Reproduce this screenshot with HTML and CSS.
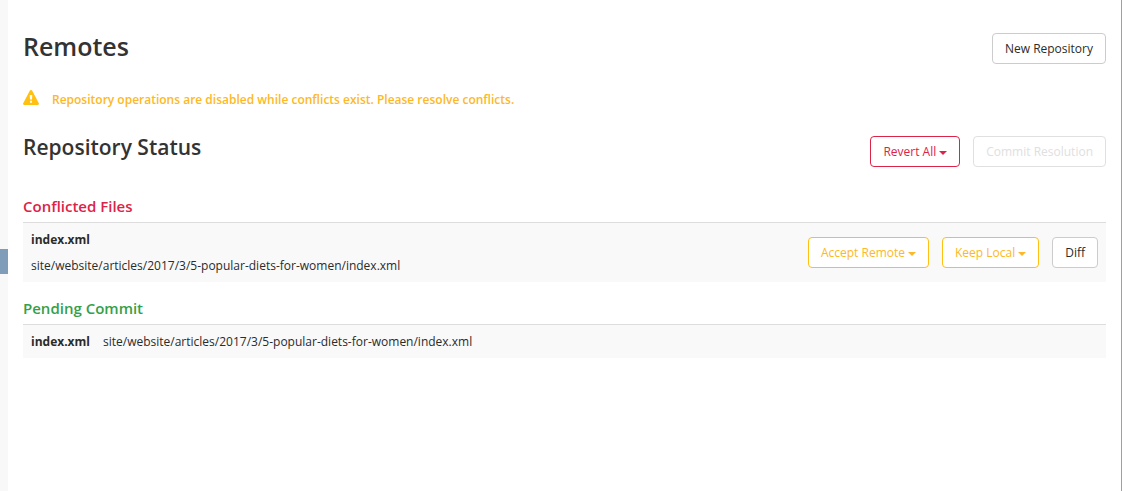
FILE: index.html
```html
<!DOCTYPE html>
<html lang="en">
<head>
<meta charset="utf-8">
<meta name="viewport" content="width=device-width, initial-scale=1">
<title>Remotes</title>
<link rel="stylesheet" href="styles.css">
</head>
<body>
<div class="layout">
  <div class="rail"><div class="rail-active"></div></div>
  <main class="content">
    <header class="bar bar-title">
      <h1 class="title">Remotes</h1>
      <button class="btn" type="button">New Repository</button>
    </header>
    <p class="warning" role="alert">
      <svg class="warning-icon" viewBox="0 0 16 15" aria-hidden="true"><path fill-rule="evenodd" d="M8 0c.5 0 .9.2 1.100.6l6.700 12.600c.5.800-.1 1.800-1.100 1.800H1.300c-1 0-1.600-1-1.100-1.800L6.900.6C7.100.2 7.500 0 8 0zM6.700 5l.3 4.600h2L9.300 5H6.700zM7 10.700v2h2v-2H7z"/></svg>
      <span>Repository operations are disabled while conflicts exist. Please resolve conflicts.</span>
    </p>
    <div class="bar">
      <h2 class="subtitle">Repository Status</h2>
      <div class="actions actions-status">
        <button class="btn btn-danger" type="button" aria-haspopup="true">Revert All<span class="caret"></span></button>
        <button class="btn" type="button" disabled>Commit Resolution</button>
      </div>
    </div>
    <section class="groups">
      <h3 class="group-title conflicted">Conflicted Files</h3>
      <ul class="files">
        <li class="file">
          <div class="file-stack">
            <strong>index.xml</strong>
            <span>site/website/articles/2017/3/5-popular-diets-for-women/index.xml</span>
          </div>
          <div class="actions">
            <button class="btn btn-warning" type="button" aria-haspopup="true">Accept Remote<span class="caret"></span></button>
            <button class="btn btn-warning" type="button" aria-haspopup="true">Keep Local<span class="caret"></span></button>
            <button class="btn" type="button">Diff</button>
          </div>
        </li>
      </ul>
      <h3 class="group-title pending">Pending Commit</h3>
      <ul class="files">
        <li class="file">
          <div class="file-line">
            <strong>index.xml</strong>
            <span>site/website/articles/2017/3/5-popular-diets-for-women/index.xml</span>
          </div>
        </li>
      </ul>
    </section>
  </main>
</div>
</body>
</html>
```
FILE: styles.css
```css
* {
  box-sizing: border-box;
}

body {
  margin: 0;
  background: #fff;
  color: #2b2b2b;
  font-family: "Open Sans", sans-serif;
  font-size: 12px;
  line-height: 17px;
}

h1, h2, h3, p, ul {
  margin: 0;
  padding: 0;
}

.layout {
  display: flex;
  min-height: 100vh;
  border-right: 1px solid #a0a0a0;
}

.rail {
  flex: none;
  width: 8px;
  padding-top: 249px;
  background: #f8f8f8;
}

.rail-active {
  height: 25px;
  background: #7f9db9;
}

.content {
  flex: 1;
  min-width: 0;
  padding: 29px 15px;
}

.bar {
  display: flex;
  align-items: flex-start;
  justify-content: space-between;
}

.bar-title {
  align-items: flex-end;
}

.title {
  padding-bottom: 1px;
  color: #333;
  font-size: 25px;
  font-weight: 600;
  line-height: 34px;
}

.subtitle {
  color: #333;
  font-size: 21px;
  font-weight: 600;
  line-height: 30px;
}

.warning {
  display: flex;
  align-items: flex-start;
  gap: 13px;
  margin: 26px 0 23px;
  color: #fdb827;
  font-weight: 600;
  line-height: 19px;
}

.warning-icon {
  flex: none;
  width: 16px;
  height: 15px;
  fill: #ffc011;
}

.actions {
  display: flex;
  gap: 13px;
}

.actions-status {
  padding-top: 4px;
}

.btn {
  padding: 6px 12px;
  border: 1px solid #ccc;
  border-radius: 4px;
  background: #fff;
  color: inherit;
  font: inherit;
  white-space: nowrap;
}

.btn:disabled {
  border-color: #e0e0e0;
  color: #e0e0e0;
}

.btn-danger {
  border-color: #dc2348;
  color: #dc2348;
}

.btn-warning {
  border-color: #ffc011;
  color: #fdb827;
}

.caret {
  display: inline-block;
  margin-left: 3px;
  vertical-align: middle;
  border-top: 4px solid;
  border-right: 4px solid transparent;
  border-left: 4px solid transparent;
}

.groups {
  margin-top: 29px;
}

.group-title {
  padding-bottom: 6px;
  font-size: 15px;
  font-weight: 600;
  line-height: 20px;
}

.conflicted {
  color: #dc2348;
}

.pending {
  color: #34a048;
}

.files {
  list-style: none;
}

.files + .group-title {
  margin-top: 16px;
}

.file {
  display: flex;
  align-items: center;
  justify-content: space-between;
  padding: 8px;
  border-top: 1px solid #ddd;
  background: #f9f9f9;
}

.file-stack {
  display: grid;
  gap: 9px;
}

.file-line {
  display: flex;
  gap: 13px;
}
```
